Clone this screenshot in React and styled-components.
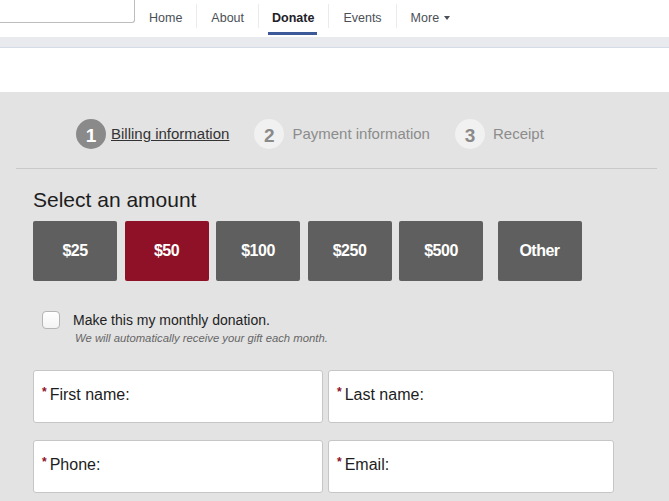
import { Fragment } from "react"
import styled, { createGlobalStyle } from "styled-components"

const GlobalStyle = createGlobalStyle`
    html, body {
        margin: 0;
        padding: 0;
        background: #e3e3e3;
        font-family: "Liberation Sans", Arial, sans-serif;
        color: #1d1d1d;
    }
`

const Pagina = styled.div`
    width: 669px;
    height: 501px;
    overflow: hidden;
    background: #e3e3e3;
`

const BarraTopo = styled.div`
    height: 37px;
    display: flex;
    align-items: stretch;
    background: #fff;
`

const CaixaBusca = styled.div`
    width: 134px;
    height: 22px;
    border-right: 1px solid #bdbdbd;
    border-bottom: 1px solid #bdbdbd;
    border-bottom-right-radius: 3px;
    background: #fff;
`

const Menu = styled.nav`
    display: flex;
    align-items: center;
`

const ItemMenu = styled.a`
    height: 37px;
    box-sizing: border-box;
    display: flex;
    align-items: center;
    padding: ${p => (p.$ativo ? "0 11px 0 9px" : "0 14px")};
    font-size: 12.5px;
    color: ${p => (p.$ativo ? "#1d2129" : "#4b4f56")};
    font-weight: ${p => (p.$ativo ? "bold" : "normal")};
    text-decoration: none;
`

const RotuloMenu = styled.span`
    box-sizing: border-box;
    display: flex;
    align-items: center;
    gap: 5px;
    padding: 3px ${p => (p.$ativo ? "3px 0 4px" : "0 0")};
    border-bottom: 3px solid ${p => (p.$ativo ? "#3d5a98" : "transparent")};
    margin-bottom: 2px;
    height: 35px;
`

const Separador = styled.span`
    width: 1px;
    height: 24px;
    background: #e9ebee;
    margin-top: -6px;
`

const Seta = styled.span`
    width: 0;
    height: 0;
    border-left: 3.5px solid transparent;
    border-right: 3.5px solid transparent;
    border-top: 4px solid #4b4f56;
    margin-top: 1px;
`

const FaixaCinza = styled.div`
    height: 10px;
    background: #e9eaed;
    border-bottom: 1px solid #d4dbe7;
`

const FaixaBranca = styled.div`
    height: 44px;
    background: #fff;
`

const Conteudo = styled.div`
    margin: 0 12px 0 16px;
    padding-top: 27px;
`

const Passos = styled.div`
    display: flex;
    align-items: center;
    gap: 25px;
    padding-left: 60px;
    padding-bottom: 19px;
    border-bottom: 1px solid #c9c9c9;
`

const Passo = styled.div`
    display: flex;
    align-items: center;
    gap: ${p => (p.$ativo ? "5px" : "8px")};
`

const Circulo = styled.span`
    width: 30px;
    height: 30px;
    border-radius: 50%;
    display: flex;
    align-items: center;
    justify-content: center;
    font-size: 19px;
    font-weight: bold;
    background: ${p => (p.$ativo ? "#8a8a8a" : "#f1f1f1")};
    color: ${p => (p.$ativo ? "#fff" : "#8a8a8a")};
    padding-top: 3px;
    box-sizing: border-box;
`

const TextoPasso = styled.span`
    font-size: 15px;
    color: ${p => (p.$ativo ? "#333" : "#8c8c8c")};
    text-decoration: ${p => (p.$ativo ? "underline" : "none")};
    margin-top: -2px;
`

const Formulario = styled.div`
    padding-left: 17px;
`

const Titulo = styled.h2`
    margin: 18px 0 0;
    font-size: 21px;
    font-weight: normal;
    line-height: 26px;
    color: #1d1d1d;
`

const Valores = styled.div`
    display: flex;
    gap: 7.5px;
    margin-top: 8px;
`

const BotaoValor = styled.button`
    width: 84px;
    height: 60px;
    border: none;
    border-radius: 2px;
    background: ${p => (p.$ativo ? "#8e1128" : "#5f5f5f")};
    color: #fff;
    font-family: "Liberation Sans", Arial, sans-serif;
    font-size: 16px;
    font-weight: bold;
    letter-spacing: -0.5px;
    margin-left: ${p => (p.$extra ? "7px" : "0")};
    cursor: pointer;
`

const LinhaMensal = styled.label`
    display: flex;
    align-items: flex-start;
    gap: 13px;
    margin: 30px 0 0 9px;
`

const Caixa = styled.span`
    width: 18px;
    height: 18px;
    box-sizing: border-box;
    border: 1px solid #b5b5b5;
    border-radius: 4px;
    background: linear-gradient(#fff, #f3f3f3);
    flex-shrink: 0;
`

const TextosMensal = styled.div`
    display: flex;
    flex-direction: column;
    gap: 3px;
`

const TextoMensal = styled.span`
    font-size: 14px;
    line-height: 18px;
    color: #222;
`

const Aviso = styled.span`
    font-size: 11.3px;
    font-style: italic;
    color: #666;
    padding-left: 2px;
`

const Campos = styled.div`
    display: grid;
    grid-template-columns: 290px 286px;
    column-gap: 5px;
    row-gap: 17px;
    margin-top: 26px;
`

const Campo = styled.div`
    height: 53px;
    box-sizing: border-box;
    background: #fff;
    border: 1px solid #c6c6c6;
    border-radius: 3px;
    display: flex;
    align-items: center;
    padding: 0 0 4px 8px;
    font-size: 16px;
    color: #1d1d1d;
`

const Asterisco = styled.span`
    color: #8e1128;
    font-size: 12px;
    font-weight: bold;
    margin-right: 3px;
    margin-top: -5px;
`

const campos = ["First name:", "Last name:", "Phone:", "Email:"]
const valores = ["$25", "$50", "$100", "$250", "$500"]
const menu = ["Home", "About", "Donate", "Events"]

export default function App() {
    return (
        <Pagina>
            <GlobalStyle />
            <BarraTopo>
                <CaixaBusca />
                <Menu>
                    {menu.map(m => (
                        <Fragment key={m}>
                            <ItemMenu $ativo={m === "Donate"}>
                                <RotuloMenu $ativo={m === "Donate"}>{m}</RotuloMenu>
                            </ItemMenu>
                            <Separador />
                        </Fragment>
                    ))}
                    <ItemMenu>
                        <RotuloMenu>More <Seta /></RotuloMenu>
                    </ItemMenu>
                </Menu>
            </BarraTopo>
            <FaixaCinza />
            <FaixaBranca />
            <Conteudo>
                <Passos>
                    <Passo $ativo>
                        <Circulo $ativo>1</Circulo>
                        <TextoPasso $ativo>Billing information</TextoPasso>
                    </Passo>
                    <Passo>
                        <Circulo>2</Circulo>
                        <TextoPasso>Payment information</TextoPasso>
                    </Passo>
                    <Passo>
                        <Circulo>3</Circulo>
                        <TextoPasso>Receipt</TextoPasso>
                    </Passo>
                </Passos>
                <Formulario>
                    <Titulo>Select an amount</Titulo>
                    <Valores>
                        {valores.map(v => (
                            <BotaoValor key={v} $ativo={v === "$50"}>{v}</BotaoValor>
                        ))}
                        <BotaoValor $extra>Other</BotaoValor>
                    </Valores>
                    <LinhaMensal>
                        <Caixa />
                        <TextosMensal>
                            <TextoMensal>Make this my monthly donation.</TextoMensal>
                            <Aviso>We will automatically receive your gift each month.</Aviso>
                        </TextosMensal>
                    </LinhaMensal>
                    <Campos>
                        {campos.map(c => (
                            <Campo key={c}>
                                <Asterisco>*</Asterisco>
                                {c}
                            </Campo>
                        ))}
                    </Campos>
                </Formulario>
            </Conteudo>
        </Pagina>
    )
}
